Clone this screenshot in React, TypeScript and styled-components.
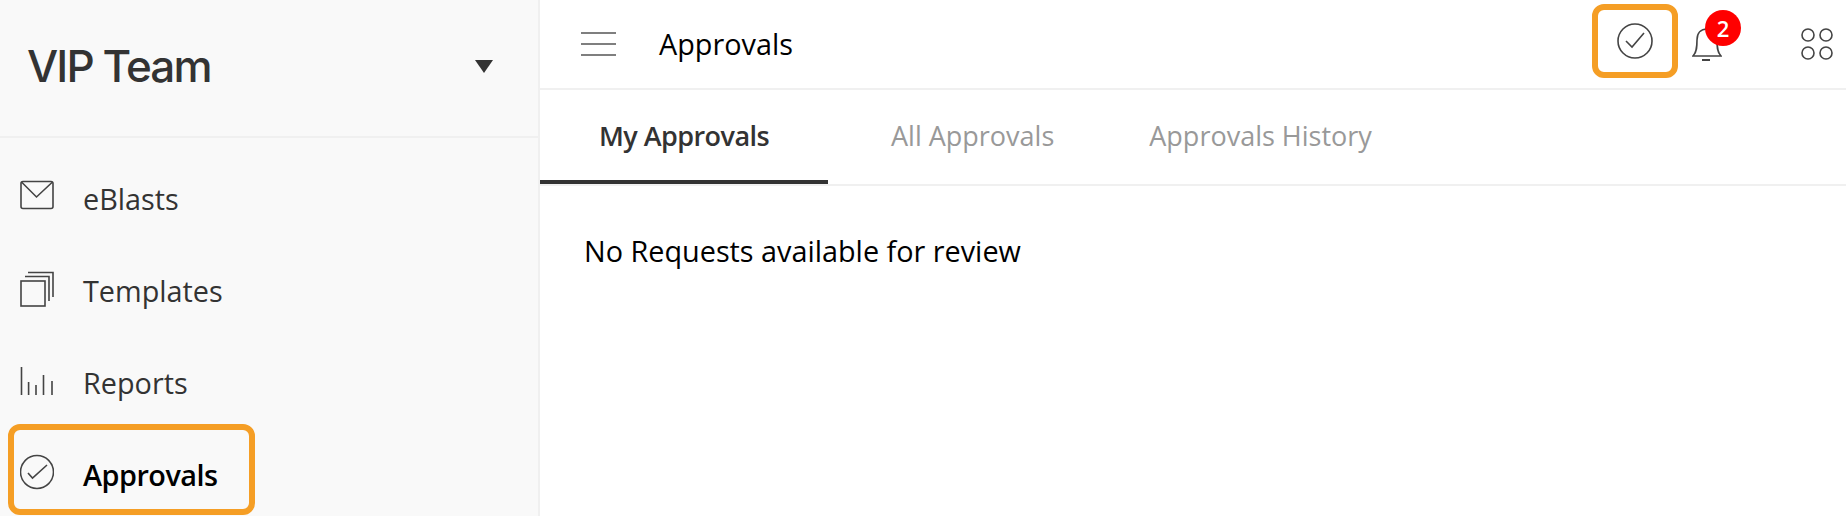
import React from 'react'
import styled, { createGlobalStyle } from 'styled-components'

const GlobalStyle = createGlobalStyle`
  html, body {
    margin: 0;
    padding: 0;
    background: #fff;
    overflow: hidden;
  }

  * {
    box-sizing: border-box;
  }
`

const Page = styled.div`
  width: 1846px;
  height: 516px;
  display: flex;
  overflow: hidden;
  font-family: 'Open Sans', sans-serif;
  color: #333;
`

const Sidebar = styled.aside`
  width: 540px;
  flex-shrink: 0;
  background: #f9f9f9;
  border-right: 2px solid #f0f0f0;
  display: flex;
  flex-direction: column;
`

const TeamHeader = styled.div`
  height: 138px;
  flex-shrink: 0;
  padding: 0 45px 4px 27px;
  border-bottom: 2px solid #f0f0f0;
  display: flex;
  align-items: center;
  justify-content: space-between;
`

const TeamName = styled.div`
  font-family: Inter, sans-serif;
  font-size: 44px;
  font-weight: 500;
  letter-spacing: -1.9px;
  color: #333;
`

const Caret = styled.div`
  width: 0;
  height: 0;
  border-left: 9px solid transparent;
  border-right: 9px solid transparent;
  border-top: 13px solid #333;
`

const NavList = styled.nav`
  padding: 14px 0 0 8px;
  display: flex;
  flex-direction: column;
`

const NavItem = styled.a<{ $active?: boolean }>`
  width: 247px;
  height: 92px;
  flex-shrink: 0;
  padding-left: 12px;
  display: flex;
  align-items: center;
  gap: 29px;
  font-size: 28.8px;
  font-weight: ${({ $active }) => ($active ? 600 : 400)};
  letter-spacing: ${({ $active }) => ($active ? '-0.5px' : '0')};
  color: ${({ $active }) => ($active ? '#000' : '#333')};
  ${({ $active }) =>
    $active &&
    `
    height: 91px;
    margin-top: -4px;
    padding: 5px 0 0 6px;
    border: 6px solid #f59e25;
    border-radius: 12px;
  `}
`

const NavLabel = styled.span<{ $active?: boolean }>`
  margin-top: ${({ $active }) => ($active ? '4px' : '0')};
`

const NavIcon = styled.svg`
  width: 34px;
  height: 38px;
  flex-shrink: 0;
  fill: none;
  stroke: #444;
  stroke-width: 1.6;
`

const Main = styled.main`
  flex: 1;
  display: flex;
  flex-direction: column;
`

const TopBar = styled.header`
  height: 90px;
  flex-shrink: 0;
  padding-left: 41px;
  border-bottom: 2px solid #f0f0f0;
  display: flex;
  align-items: center;
`

const Burger = styled.svg`
  width: 35px;
  height: 24px;
  stroke: #555;
  stroke-width: 1.5;
`

const PageTitle = styled.h1`
  margin: 0 0 2px 43px;
  font-size: 28.8px;
  font-weight: 400;
  color: #000;
`

const TopActions = styled.div`
  margin-left: auto;
  display: flex;
  align-items: center;
`

const CheckButton = styled.button`
  width: 86px;
  height: 74px;
  flex-shrink: 0;
  margin-bottom: 6px;
  background: #fff;
  border: 6px solid #f59e25;
  border-radius: 12px;
  padding: 0;
  display: flex;
  align-items: center;
  justify-content: center;
`

const TopIcon = styled.svg`
  fill: none;
  stroke: #444;
  stroke-width: 1.6;
`

const BellWrap = styled.div`
  position: relative;
  margin-left: 14px;
  width: 30px;
  height: 36px;
`

const Badge = styled.span`
  position: absolute;
  top: -16px;
  left: 13px;
  width: 36px;
  height: 36px;
  border-radius: 50%;
  background: #f00;
  color: #fff;
  font-size: 22px;
  font-weight: 600;
  display: flex;
  align-items: center;
  justify-content: center;
`

const AppsIcon = styled(TopIcon)`
  margin: 0 13px 0 79px;
`

const Tabs = styled.div`
  height: 96px;
  flex-shrink: 0;
  border-bottom: 2px solid #f0f0f0;
  display: flex;
`

const Tab = styled.div<{ $active?: boolean }>`
  height: 94px;
  padding: ${({ $active }) => ($active ? '0 0 0 59px' : '0 32px 4px 63px')};
  width: ${({ $active }) => ($active ? '288px' : 'auto')};
  display: flex;
  align-items: center;
  font-size: 27px;
  font-weight: ${({ $active }) => ($active ? 600 : 400)};
  letter-spacing: ${({ $active }) => ($active ? '-0.55px' : '0')};
  color: ${({ $active }) => ($active ? '#333' : '#999')};
  border-bottom: ${({ $active }) => ($active ? '4px solid #333' : 'none')};
`

const Content = styled.p`
  margin: 0;
  padding: 45px 0 0 44px;
  font-size: 28.8px;
  color: #000;
`

export default function App() {
  return (
    <>
      <GlobalStyle />
      <Page>
        <Sidebar>
          <TeamHeader>
            <TeamName>VIP Team</TeamName>
            <Caret />
          </TeamHeader>
          <NavList>
            <NavItem>
              <NavIcon viewBox="0 0 34 38">
                <rect x="1" y="2.5" width="32" height="27" rx="2" />
                <path d="M1.5 3 L16.5 18 L32.5 3" />
              </NavIcon>
              <NavLabel>eBlasts</NavLabel>
            </NavItem>
            <NavItem>
              <NavIcon viewBox="0 0 34 38">
                <rect x="1" y="10" width="24" height="25" />
                <path d="M5 5.5 H29 V30 M8 1.5 H33 V26" />
              </NavIcon>
              <NavLabel>Templates</NavLabel>
            </NavItem>
            <NavItem>
              <NavIcon viewBox="0 0 34 38">
                <path d="M1.5 4 V32 M8.6 19 V32 M16 22 V32 M23.5 12 V32 M32 18 V32" />
              </NavIcon>
              <NavLabel>Reports</NavLabel>
            </NavItem>
            <NavItem $active>
              <NavIcon viewBox="0 0 34 38">
                <circle cx="17" cy="19" r="16.5" />
                <path d="M8 20 L12.5 25 L27 12" />
              </NavIcon>
              <NavLabel $active>Approvals</NavLabel>
            </NavItem>
          </NavList>
        </Sidebar>
        <Main>
          <TopBar>
            <Burger viewBox="0 0 35 24">
              <path d="M0 1 H35 M0 12 H35 M0 23 H35" />
            </Burger>
            <PageTitle>Approvals</PageTitle>
            <TopActions>
              <CheckButton>
                <TopIcon width="36" height="36" viewBox="0 0 36 36">
                  <circle cx="18" cy="18" r="17" />
                  <path d="M9 18 L15 24 L27 10" />
                </TopIcon>
              </CheckButton>
              <BellWrap>
                <TopIcon width="30" height="36" viewBox="0 0 30 36">
                  <path d="M1 30 C5 26 5 20 5 14 C5 7 9 3 15 3 C21 3 25 7 25 14 C25 20 25 26 29 30 Z" />
                  <path d="M10 34 H18" strokeWidth="2" />
                </TopIcon>
                <Badge>2</Badge>
              </BellWrap>
              <AppsIcon width="32" height="32" viewBox="0 0 32 32">
                <circle cx="7" cy="7" r="6" />
                <circle cx="25" cy="7" r="6" />
                <circle cx="7" cy="25" r="6" />
                <circle cx="25" cy="25" r="6" />
              </AppsIcon>
            </TopActions>
          </TopBar>
          <Tabs>
            <Tab $active>My Approvals</Tab>
            <Tab>All Approvals</Tab>
            <Tab>Approvals History</Tab>
          </Tabs>
          <Content>No Requests available for review</Content>
        </Main>
      </Page>
    </>
  )
}
